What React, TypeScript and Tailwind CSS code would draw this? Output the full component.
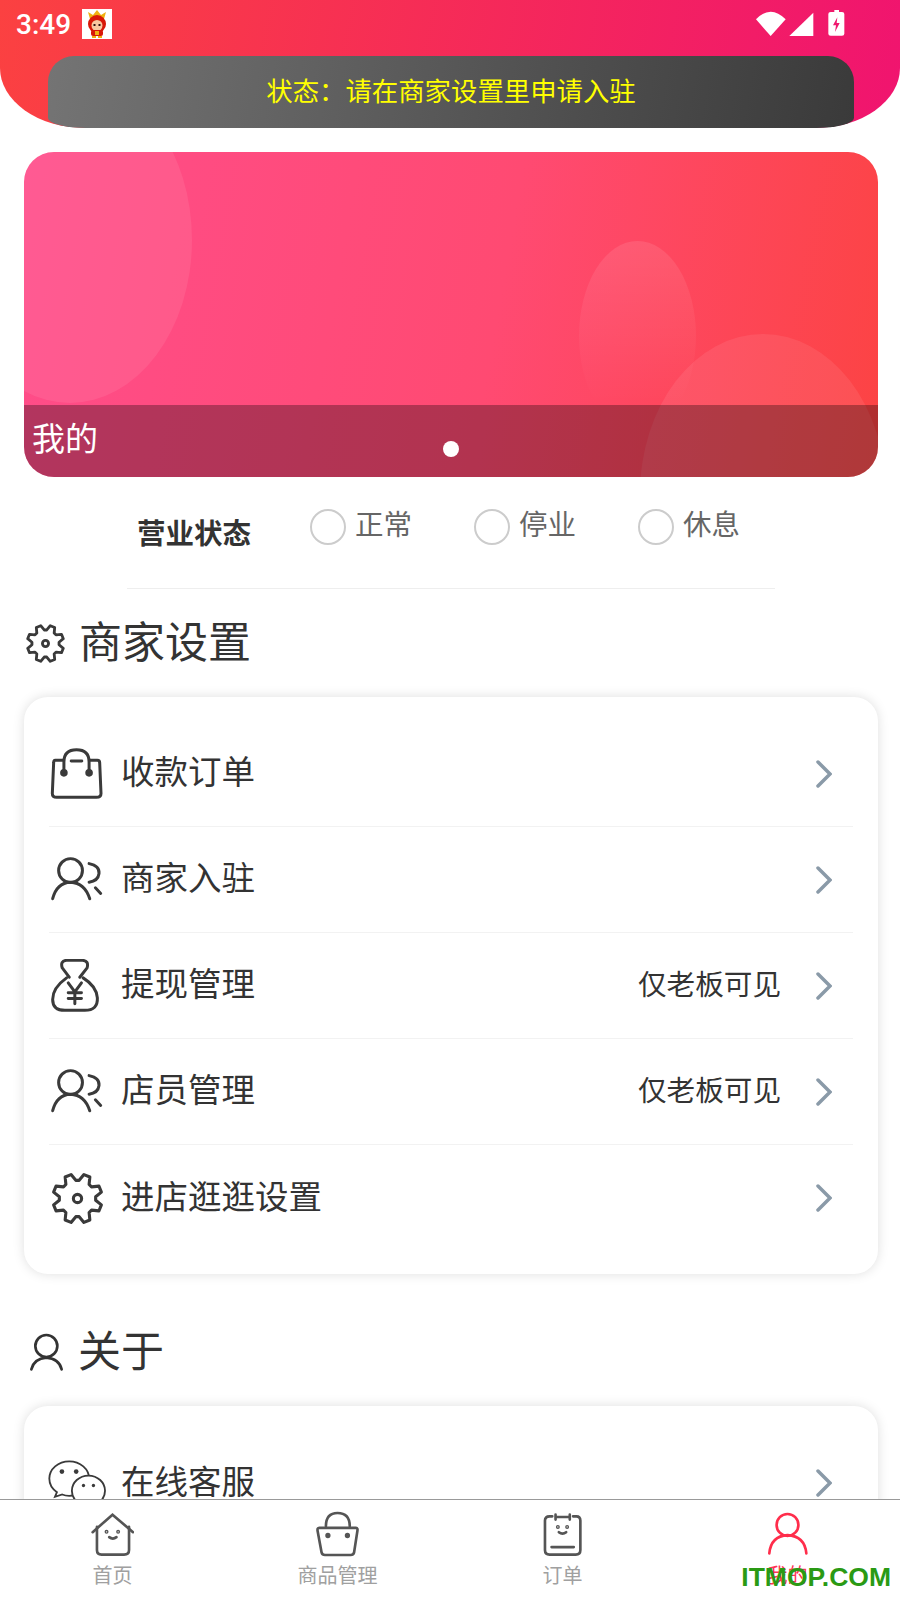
import { ReactNode } from "react";

// zoomed-reference coordinates are used directly as viewBox values
function gearPath(cx: number, cy: number, outer: number, inner: number) {
  const pts: string[] = [];
  for (let i = 0; i < 8; i++) {
    const a = (i * Math.PI) / 4 - Math.PI / 8;
    const steps: [number, number][] = [
      [-0.3, inner],
      [-0.13, outer],
      [0.13, outer],
      [0.3, inner],
    ];
    for (const [d, r] of steps) {
      pts.push(`${(cx + r * Math.cos(a + d)).toFixed(1)} ${(cy + r * Math.sin(a + d)).toFixed(1)}`);
    }
  }
  return `M${pts.join("L")}Z`;
}

function Gear({ className, width = 9 }: { className: string; width?: number }) {
  return (
    <svg viewBox="0 0 160 160" className={className} fill="none" stroke="#3a3a3a" strokeWidth={width} strokeLinejoin="round">
      <path d={gearPath(80, 80, 72, 53)} />
      <circle cx="80" cy="80" r="12" />
    </svg>
  );
}

function BagIcon() {
  return (
    <svg viewBox="60 80 160 160" className="h-[53px] w-[53px]" fill="none" stroke="#3a3a3a" strokeWidth="9" strokeLinecap="round">
      <path d="M100 120H76Q71 120 71 128L67 220Q67 232 80 232H200Q214 232 214 220L210 128Q210 120 203 120H180" />
      <path d="M102 158V125Q102 88 140 88Q178 88 178 125V158" />
      <path d="M124 122H156" />
      <circle cx="102" cy="158" r="7" fill="#3a3a3a" />
      <circle cx="178" cy="158" r="7" fill="#3a3a3a" />
    </svg>
  );
}

function PeopleIcon() {
  return (
    <svg viewBox="60 400 160 160" className="h-[53px] w-[53px]" fill="none" stroke="#3a3a3a" strokeWidth="9" strokeLinecap="round">
      <circle cx="122" cy="453" r="36" />
      <path d="M68 538Q80 490 122 488Q165 490 180 538" />
      <path d="M178 432Q210 438 208 462Q205 485 178 488" />
      <path d="M197 505L213 522" />
    </svg>
  );
}

function MoneyIcon() {
  return (
    <svg viewBox="60 713 160 160" className="h-[53px] w-[53px]" fill="none" stroke="#3a3a3a" strokeWidth="9" strokeLinecap="round" strokeLinejoin="round">
      <path d="M118 768L97 740Q90 718 110 717H158Q178 718 172 740L150 768" />
      <path d="M110 770Q68 800 68 835Q68 868 105 868H165Q205 868 203 830Q200 795 160 770" />
      <path d="M115 785L135 812L155 785M115 815H155M115 832H155M135 812V848" />
    </svg>
  );
}

function WechatIcon() {
  return (
    <svg viewBox="140 470 190 190" className="h-[63px] w-[63px] shrink-0" fill="#fff" stroke="#3a3a3a" strokeWidth="5.5">
      <path d="M207 483C174 483 147 506 147 535C147 552 155 566 170 576L164 590L186 583C193 586 200 587 207 587C240 587 267 564 267 535C267 506 240 483 207 483Z" />
      <ellipse cx="265" cy="572" rx="50" ry="46" />
      <g fill="#3a3a3a" stroke="none">
        <circle cx="185" cy="514" r="7" />
        <circle cx="228" cy="514" r="7" />
        <circle cx="250" cy="556" r="5" />
        <circle cx="280" cy="556" r="5" />
      </g>
    </svg>
  );
}

function Chevron() {
  return (
    <svg viewBox="0 0 17 28" className="h-[28px] w-[17px]" fill="none" stroke="#8a9aa8" strokeWidth="3.5" strokeLinecap="round">
      <path d="M3 2L15 14L3 26" />
    </svg>
  );
}

function Row({ icon, label, note, line = true }: { icon: ReactNode; label: string; note?: string; line?: boolean }) {
  return (
    <div className={`flex h-[106px] items-center pr-[21px] ${line ? "border-b border-[#f2f2f2]" : ""}`}>
      <div className="flex w-[72px] shrink-0 items-center pl-px">{icon}</div>
      <span className="flex-1 pb-[6px] text-[33.5px] text-[#333]">{label}</span>
      {note && <span className="mr-[34px] pb-[4px] text-[28.6px] text-[#333]">{note}</span>}
      <Chevron />
    </div>
  );
}

function Radio({ label }: { label: string }) {
  return (
    <div className="flex w-[164px] shrink-0 items-start gap-[9px]">
      <div className="h-[36px] w-[36px] rounded-full border-2 border-[#ccc]" />
      <span className="mt-[-2px] text-[28.5px] leading-[32px] text-[#666]">{label}</span>
    </div>
  );
}

function Mascot() {
  return (
    <svg viewBox="0 0 30 30" className="mt-[9px] ml-[11px] h-[30px] w-[30px] bg-white">
      <path d="M8 10L6 3L11 6L15 1L19 6L24 3L22 10Z" fill="#f0b010" />
      <circle cx="15" cy="15" r="9" fill="#d81808" />
      <circle cx="15" cy="16.5" r="5.5" fill="#f8c8a0" />
      <rect x="11.5" y="15" width="2" height="2" fill="#301010" />
      <rect x="16.5" y="15" width="2" height="2" fill="#301010" />
      <rect x="9" y="21" width="12" height="6" rx="2" fill="#d81808" />
      <rect x="13" y="22" width="4" height="4" fill="#f0b010" />
      <rect x="10" y="27" width="4" height="2" fill="#f0b010" />
      <rect x="16" y="27" width="4" height="2" fill="#f0b010" />
    </svg>
  );
}

function StatusIcons() {
  return (
    <svg viewBox="0 0 480 150" className="h-[50px] w-[160px]">
      <path d="M48 58Q92 12 137 58L92 108Z" fill="#fff" />
      <path d="M148 108L220 38V108Z" fill="#fff" />
      <path d="M283 30H297V36H306Q313 36 313 42V101Q313 107 306 107H272Q265 107 265 101V42Q265 36 272 36H283Z" fill="#fff" />
      <path d="M292 52L279 76H288L285 96L299 69H290Z" fill="#f0186e" />
    </svg>
  );
}

function TabHome() {
  return (
    <svg viewBox="270 65 130 140" className="h-[47px] w-[43px]" fill="none" stroke="#555" strokeWidth="8" strokeLinecap="round">
      <path d="M275 128L335 75L397 128" />
      <path d="M288 112V182Q288 196 302 196H370Q385 196 385 182V112" />
      <path d="M325 143Q336 152 347 143" />
      <circle cx="317" cy="127" r="2" />
      <circle cx="352" cy="127" r="2" />
    </svg>
  );
}

function TabBag() {
  return (
    <svg viewBox="945 65 130 140" className="h-[47px] w-[43px]" fill="none" stroke="#555" strokeWidth="8" strokeLinecap="round">
      <path d="M975 110Q975 70 1010 70Q1047 70 1047 110" />
      <path d="M955 115H1066Q1072 115 1070 125L1060 190Q1058 197 1050 197H972Q964 197 962 190L950 125Q948 115 955 115Z" />
      <circle cx="981" cy="138" r="4" fill="#555" />
      <circle cx="1040" cy="138" r="4" fill="#555" />
    </svg>
  );
}

function TabOrder() {
  return (
    <svg viewBox="271 65 130 140" className="h-[47px] w-[43px]" fill="none" stroke="#555" strokeWidth="8" strokeLinecap="round">
      <path d="M305 80H297Q283 80 283 93V182Q283 196 297 196H376Q390 196 390 182V93Q390 80 378 80H368" />
      <path d="M315 75V90M358 75V90M315 82H358" />
      <path d="M325 128Q336 137 347 128" />
      <path d="M303 173H370" />
      <circle cx="322" cy="112" r="2" />
      <circle cx="350" cy="112" r="2" />
    </svg>
  );
}

function TabUser() {
  return (
    <svg viewBox="945 65 130 140" className="h-[47px] w-[43px]" fill="none" stroke="#ff2d4b" strokeWidth="8" strokeLinecap="round">
      <circle cx="1010" cy="106" r="33" />
      <path d="M955 192Q960 140 1010 137Q1062 140 1067 192" />
    </svg>
  );
}

function Tab({ icon, label, active }: { icon: ReactNode; label: string; active?: boolean }) {
  return (
    <div className="flex flex-1 flex-col items-center pt-[11px]">
      {icon}
      <span className={`mt-[3px] text-[20px] leading-[28px] ${active ? "text-[#ff3355]" : "text-[#a0a0a0]"}`}>{label}</span>
    </div>
  );
}

export default function App() {
  return (
    <div className="relative flex h-[1600px] w-[900px] flex-col overflow-hidden bg-white font-['Noto_Sans_CJK_SC','Liberation_Sans',sans-serif]">
      <div className="min-h-0 flex-1 overflow-hidden">
        <div className="h-[128px] rounded-br-[85px_60px] rounded-bl-[85px_60px] bg-[linear-gradient(100deg,#fb4141,#f0146f)]">
          <div className="flex h-[56px] items-start justify-between">
            <div className="flex items-start pl-[16px]">
              <span className="mt-[7px] font-['Roboto',sans-serif] text-[28px] leading-[36px] font-medium text-white">3:49</span>
              <Mascot />
            </div>
            <StatusIcons />
          </div>
          <div className="mr-[46px] ml-[48px] flex h-[72px] items-center justify-center rounded-t-[26px] rounded-br-[38px_10px] rounded-bl-[38px_10px] bg-[linear-gradient(100deg,#747474,#3a3a3a)] pb-[4px] text-[26.4px] text-[#ffff00]">
            状态：请在商家设置里申请入驻
          </div>
        </div>

        <div className="relative mt-[24px] mr-[22px] ml-[24px] h-[325px] overflow-hidden rounded-[30px] bg-[linear-gradient(100deg,#ff4d8a,#ff4a72_55%,#fc4343)]">
          <div className="absolute top-[-75px] left-[-76px] h-[326px] w-[244px] rounded-[50%] bg-white/[0.08]" />
          <div className="absolute top-[89px] left-[555px] h-[190px] w-[117px] rounded-[50%] bg-[linear-gradient(180deg,rgba(255,255,255,0.1),rgba(255,255,255,0)_85%)]" />
          <div className="absolute top-[182px] left-[616px] h-[320px] w-[246px] rounded-[50%] bg-white/[0.08]" />
          <div className="absolute inset-x-0 bottom-0 h-[72px] bg-black/30">
            <span className="absolute top-[7px] left-[8px] text-[33px] leading-[50px] text-white">我的</span>
            <div className="absolute top-[36px] left-[419px] h-[16px] w-[16px] rounded-full bg-white" />
          </div>
        </div>

        <div className="mr-[125px] ml-[127px] flex h-[112px] items-start border-b border-[#eee] pt-[32px] pl-[10px]">
          <span className="mt-[7px] w-[173px] shrink-0 text-[28.5px] leading-[32px] font-bold text-[#333]">营业状态</span>
          <Radio label="正常" />
          <Radio label="停业" />
          <Radio label="休息" />
        </div>

        <div className="flex h-[108px] items-center pl-[25px]">
          <Gear className="h-[41px] w-[41px]" width={11} />
          <span className="ml-[13px] pb-[7px] text-[43px] text-[#333]">商家设置</span>
        </div>

        <div className="mr-[22px] ml-[24px] rounded-[24px] bg-white px-[25px] pt-[24px] pb-[23px] shadow-[0_0_12px_rgba(0,0,0,0.13)]">
          <Row icon={<BagIcon />} label="收款订单" />
          <Row icon={<PeopleIcon />} label="商家入驻" />
          <Row icon={<MoneyIcon />} label="提现管理" note="仅老板可见" />
          <Row icon={<PeopleIcon />} label="店员管理" note="仅老板可见" />
          <Row icon={<Gear className="h-[55px] w-[55px]" />} label="进店逛逛设置" line={false} />
        </div>

        <div className="flex h-[132px] items-center pt-[20px] pl-[29px]">
          <svg viewBox="85 95 105 120" className="mt-[4px] h-[40px] w-[35px]" fill="none" stroke="#333" strokeWidth="8" strokeLinecap="round">
            <circle cx="137" cy="137" r="33" />
            <path d="M92 207Q100 175 137 172Q175 175 183 207" />
          </svg>
          <span className="ml-[14px] pb-[4px] text-[43px] text-[#333]">关于</span>
        </div>

        <div className="mr-[22px] ml-[24px] rounded-[24px] bg-white px-[25px] pt-[24px] pb-[23px] shadow-[0_0_12px_rgba(0,0,0,0.13)]">
          <div className="flex h-[106px] items-center pr-[21px]">
            <div className="ml-[-2px] w-[74px] shrink-0 pt-[10px]"><WechatIcon /></div>
            <span className="flex-1 pb-[6px] text-[33.5px] text-[#333]">在线客服</span>
            <Chevron />
          </div>
        </div>
      </div>

      <div className="flex h-[101px] shrink-0 border-t border-[#999] bg-white">
        <Tab icon={<TabHome />} label="首页" />
        <Tab icon={<TabBag />} label="商品管理" />
        <Tab icon={<TabOrder />} label="订单" />
        <Tab icon={<TabUser />} label="我的" active />
      </div>

      <span className="absolute right-[9px] bottom-[8px] font-['Liberation_Sans',sans-serif] text-[26.5px] leading-[30px] font-bold text-[#2a9a14]">ITMOP.COM</span>
    </div>
  );
}
